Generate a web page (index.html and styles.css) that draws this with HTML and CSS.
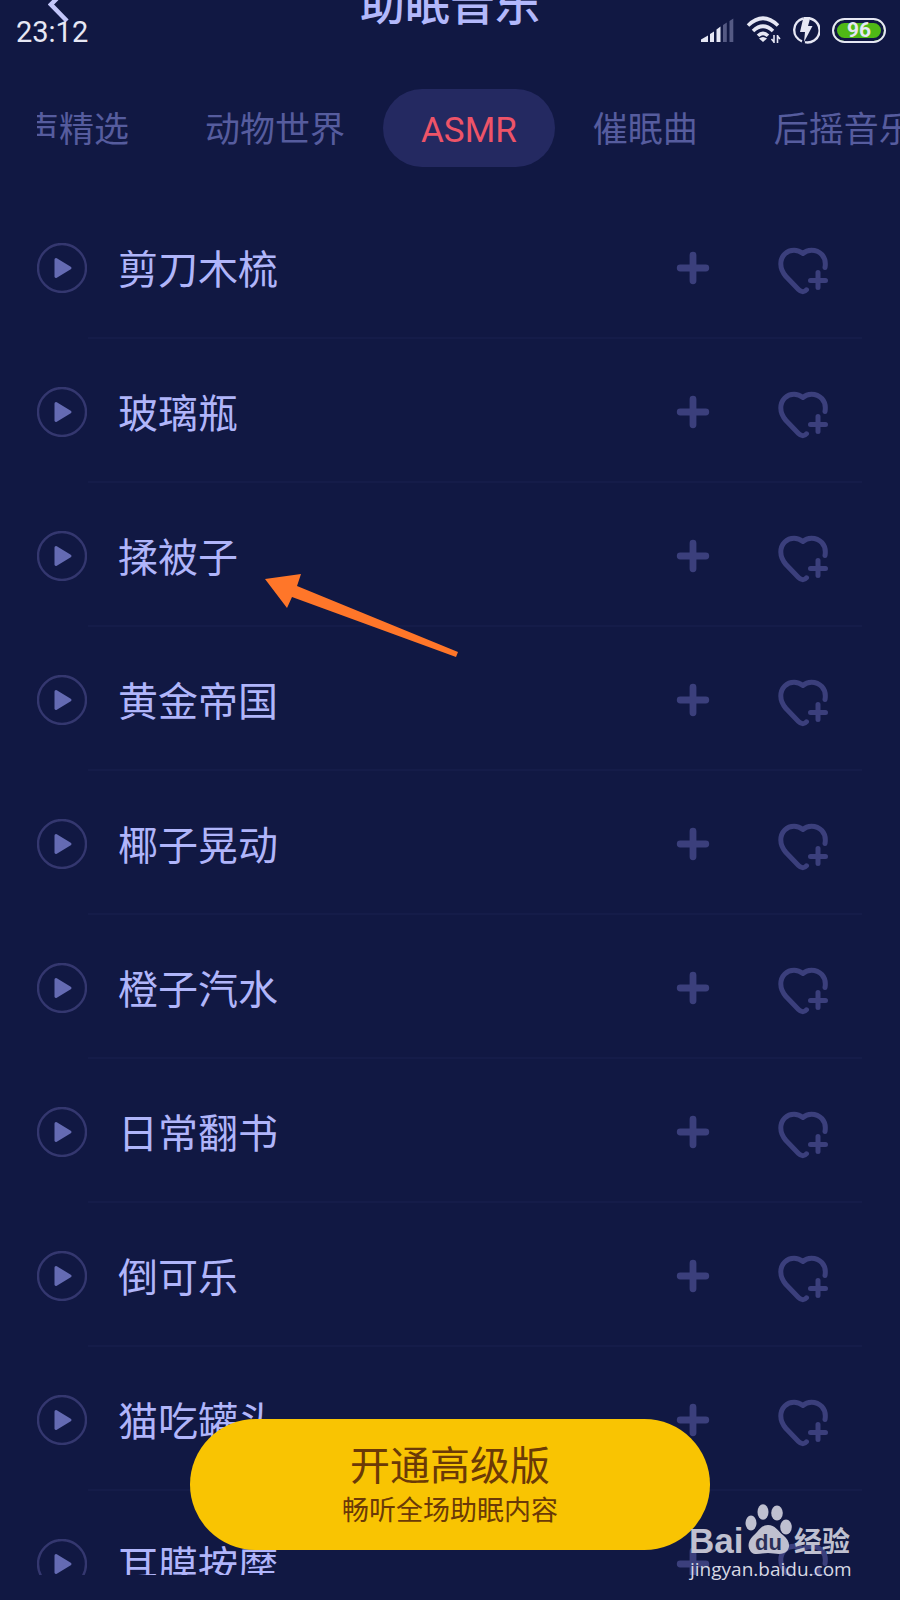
FILE: index.html
```html
<!doctype html>
<html lang="zh-CN">
<head>
	<meta charset="utf-8" />
	<meta name="viewport" content="width=device-width, initial-scale=1" />

	<title>助眠音乐</title>

<link rel="stylesheet" href="styles.css">

</head>
<body>

<!-- icons shared by all rows -->
<svg class="defs" width="0" height="0" aria-hidden="true">
	<symbol id="play" viewBox="0 0 50 50">
		<circle cx="25" cy="25" r="24" fill="none" stroke="#34376f" stroke-width="2.4"/>
		<path d="M19 16.500L33 25L19 33.500Z" fill="#656bb3" stroke="#656bb3" stroke-width="3" stroke-linejoin="round"/>
	</symbol>
	<symbol id="plus" viewBox="0 0 34 34">
		<path d="M17 4.200V29.800M4.200 17H29.800" fill="none" stroke="#3b3f7c" stroke-width="6.800" stroke-linecap="round"/>
	</symbol>
	<symbol id="heart" viewBox="0 0 50 50">
		<path d="M47 20.500C49 9 41 3.200 33.500 3.200C30 3.200 27 4.500 25 6.500C22.500 4.500 20 3.200 16 3.200C9 3.200 2.800 8.500 2.800 17C2.800 22 5 26 8 29.500L20.500 42.500C23.500 45.500 26.500 45.300 28.500 42.800" fill="none" stroke="#3b3f7c" stroke-width="5" stroke-linecap="round" stroke-linejoin="round"/>
		<path d="M40 25.500V40.500M32.500 33.500H47.500" fill="none" stroke="#3b3f7c" stroke-width="5" stroke-linecap="round"/>
	</symbol>
</svg>

<div class="screen">
	<header class="title-bar">
		<button class="back" aria-label="返回">
			<svg width="22" height="36" viewBox="0 0 22 36"><path d="M18 1L3 16.500L19 33" fill="none" stroke="#c3c6fa" stroke-width="4.500"/></svg>
		</button>
		<h1>助眠音乐</h1>
	</header>

	<div class="status">
		<span class="clock">23:12</span>
		<svg width="33" height="26" viewBox="0 0 33 26">
			<path d="M0 25V22.500L7 18.500V25ZM9 25V17L13 14.500V25ZM15.500 25V12.500L19.500 9.500V25Z" fill="#e6e7f4"/>
			<path d="M22 25V8L25.800 5.500V25ZM28.500 25V4L32.300 1.500V25Z" fill="#555a84"/>
		</svg>
		<svg class="wifi" width="36" height="28" viewBox="0 0 36 28">
			<path d="M2 9.500Q17 -5 32 9.500M7 15Q17 5.500 27 15M12 19.800Q17 15 22 19.800" fill="none" stroke="#e6e7f4" stroke-width="3.600"/>
			<path d="M17 26L13 22.500Q17 19.500 21 22.500Z" fill="#e6e7f4"/>
			<path d="M28 19V27M31.500 19V27M28 26L25.500 23M31.500 20L34 23" fill="none" stroke="#e6e7f4" stroke-width="1.600"/>
		</svg>
		<svg class="charge" width="28" height="28" viewBox="0 0 28 28">
			<path d="M11 2.500A12 12 0 0 0 10 25.300M18 2.500A12 12 0 0 1 13 26.200" fill="none" stroke="#e6e7f4" stroke-width="2.400"/>
			<path d="M11.500 1H18.500L16 10H20.500L12 26L13 16H8Z" fill="#e6e7f4"/>
		</svg>
		<span class="battery">96</span>
	</div>

	<nav class="tabs">
		<ul>
			<li><a href="#voice">声精选</a></li>
			<li><a href="#animal">动物世界</a></li>
			<li><a class="on" href="#asmr">ASMR</a></li>
			<li><a href="#lullaby">催眠曲</a></li>
			<li><a href="#postrock">后摇音乐</a></li>
		</ul>
	</nav>

	<main>
		<ul class="tracks" id="tracks"></ul>
	</main>

	<svg class="arrow" width="196" height="86" viewBox="0 0 196 86" aria-hidden="true">
		<path d="M1 6L37 1L33 13L194 79L192 84L28 24L23 35Z" fill="#ff7629"/>
	</svg>

	<button class="upgrade">
		<span class="big">开通高级版</span>
		<span class="small">畅听全场助眠内容</span>
	</button>

	<a class="mark" href="#jingyan">
		<svg width="162" height="52" viewBox="0 0 162 52">
			<text class="bai" x="-1" y="49">Bai</text>
			<ellipse cx="61" cy="19" rx="5.500" ry="7.500"/>
			<ellipse cx="73" cy="8" rx="5.500" ry="7.800"/>
			<ellipse cx="87" cy="9" rx="5.800" ry="7.500"/>
			<ellipse cx="96" cy="23" rx="5.800" ry="7.500"/>
			<path d="M78 21C85 21 88 27 93 31C99 36 101 42 97 47C92 52 85 49 78 49C71 49 65 52 61 48C57 43 58 37 63 32C69 27 71 21 78 21Z"/>
			<text class="du" x="65" y="46">du</text>
			<text class="jy" x="104" y="48">经验</text>
		</svg>
		<span>jingyan.baidu.com</span>
	</a>
</div>

<script>
const names = ["剪刀木梳", "玻璃瓶", "揉被子", "黄金帝国", "椰子晃动", "橙子汽水", "日常翻书", "倒可乐", "猫吃罐头", "耳膜按摩"];

function icon(id, w, h){
	return "<svg width='" + w + "' height='" + h + "'><use href='#" + id + "'/></svg>";
}

function row(name){
	return "<li>" +
		"<button class='play' aria-label='播放 " + name + "'>" + icon("play", 50, 50) + "</button>" +
		"<div class='body'>" +
			"<span class='name'>" + name + "</span>" +
			"<button aria-label='添加'>" + icon("plus", 34, 34) + "</button>" +
			"<button class='fav' aria-label='收藏'>" + icon("heart", 50, 50) + "</button>" +
		"</div></li>";
}

document.getElementById("tracks").innerHTML = names.map(row).join("");
</script>

</body>
</html>
```
FILE: styles.css
```css
* {
	box-sizing: border-box;
}

body {
	margin: 0;

	background: #111843;
	font-family: Roboto, "Noto Sans CJK SC", sans-serif;
}

ul {
	margin:  0;
	padding: 0;

	list-style: none;
}

button {
	margin:  0;
	padding: 0;
	border:  0;

	background: none;
	font-family: inherit;
	cursor: pointer;
}

svg {
	display: block;
}

a {
	text-decoration: none;
}

svg.defs {
	position: absolute;
}

div.screen {
	position: relative;
	display: flex;
	flex-direction: column;

	height: 100vh;
	padding-bottom: 25px;
	overflow: hidden;
}

/* the title is half scrolled under the status bar */
header.title-bar {
	display: grid;
	grid-template-columns: 1fr auto 1fr;
	align-items: center;
	flex: none;

	height: 64px;
	margin-top: -26px;
	padding: 0 48px;
}

header.title-bar h1 {
	margin: 0;

	color: #b3b8fb;
	font-size: 45px;
	font-weight: 500;
	line-height: 64px;
}

button.back {
	justify-self: start;
}

div.status {
	position: absolute;
	top: 12px;
	left: 16px;
	right: 14px;

	display: flex;
	align-items: center;

	height: 36px;

	color: #e6e7f4;
}

div.status .clock {
	flex: 1;

	padding-top: 4px;

	font-size: 29px;
	line-height: 36px;
}

div.status .wifi {
	margin-left: 12px;
}

div.status .charge {
	margin-left: 10px;
}

div.status .battery {
	width: 54px;
	height: 25px;
	margin-left: 12px;

	border: 2px solid #e6e7f4;
	border-radius: 13px;
	background: #4fb916;
	box-shadow: inset 0 0 0 3px #111843;

	font-size: 21px;
	font-weight: bold;
	line-height: 21px;
	text-align: center;
}

nav.tabs {
	flex: none;

	margin: 51px 0 28px 37px;
	overflow: hidden;
}

nav.tabs ul {
	display: flex;

	margin-left: -51px;
}

nav.tabs a {
	display: block;

	padding: 6px 38px 0;
	border-radius: 39px;

	color: #565c9e;
	font-size: 35px;
	line-height: 72px;
	white-space: nowrap;
}

nav.tabs a.on {
	background: #242961;
	color: #ee5468;
}

main {
	flex: 1;

	min-height: 0;
	overflow: hidden;
}

ul.tracks li {
	display: flex;
	align-items: center;

	height: 144px;
	margin: 0 38px 0 37px;
}

ul.tracks .play {
	margin: 2px 1px 0 0;
}

ul.tracks .body {
	display: flex;
	align-items: center;
	flex: 1;

	height: 144px;
	padding: 4px 34px 0 30px;
	border-bottom: 2px solid #151c49;
}

ul.tracks .name {
	flex: 1;

	padding-top: 6px;

	color: #b0b5fa;
	font-size: 40px;
	line-height: 56px;
}

ul.tracks .fav {
	margin: 7px 0 0 68px;
}

svg.arrow {
	position: absolute;
	top: 573px;
	left: 264px;
}

button.upgrade {
	position: absolute;
	bottom: 50px;
	left: 50%;
	transform: translateX(-50%);

	width: 520px;
	padding: 22px 0 20px;
	border-radius: 66px;

	background: #f9c402;
	color: #6b3a07;
}

button.upgrade span {
	display: block;
}

button.upgrade .big {
	font-size: 40px;
	line-height: 52px;
}

button.upgrade .small {
	font-size: 27px;
	line-height: 37px;
}

a.mark {
	position: absolute;
	right: 48px;
	bottom: 18px;

	width: 162px;

	color: #d7d8e4;
}

a.mark svg {
	fill: #bfc0d0;
}

a.mark span {
	display: block;

	font-family: "Open Sans", "Noto Sans", sans-serif;
	font-size: 19px;
	line-height: 26px;
}

a.mark text {
	font-family: "Liberation Sans", "Noto Sans CJK SC", sans-serif;
	font-weight: bold;
}

a.mark .bai {
	font-size: 35px;
}

a.mark .du {
	font-size: 22px;
	fill: #2a2f58;
}

a.mark .jy {
	font-size: 28px;
}
```
